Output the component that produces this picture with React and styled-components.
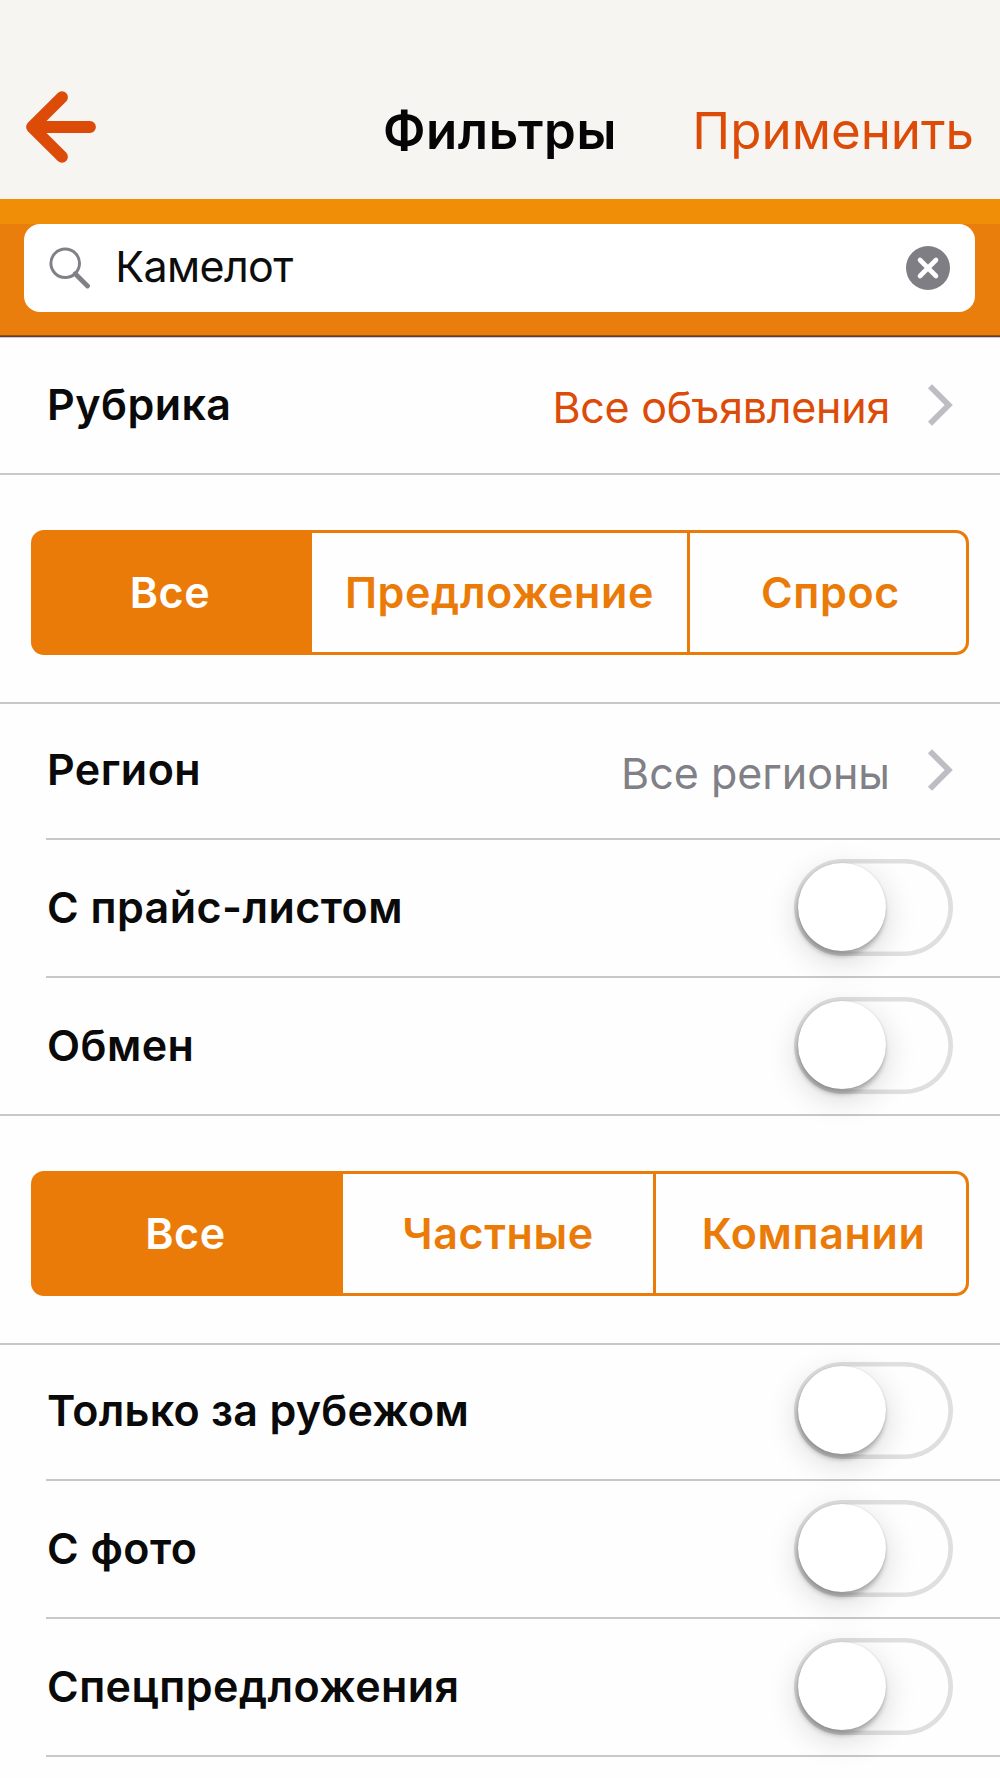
import { useState } from "react";
import styled, { createGlobalStyle } from "styled-components";

const GlobalStyle = createGlobalStyle`
  * {
    box-sizing: border-box;
  }
  body {
    margin: 0;
    background-color: #fefefe;
    font-family: Inter, "Noto Sans", sans-serif;
  }
  button {
    padding: 0;
    border: none;
    background: none;
    font: inherit;
    cursor: pointer;
  }
`;

const Screen = styled.div`
  width: 1000px;
  height: 1778px;
  overflow: hidden;
  background-color: #fefefe;
`;

const Header = styled.header`
  display: grid;
  grid-template-columns: 1fr auto 1fr;
  align-items: center;
  height: 199px;
  padding: 62px 26px 0;
  background-color: #f6f5f1;
`;
const BackButton = styled.button`
  justify-self: start;
  display: flex;
  padding-bottom: 8px;
`;
const Title = styled.h1`
  margin: 0;
  font-size: 51px;
  font-weight: 600;
  line-height: 62px;
  letter-spacing: 0.6px;
  color: #050505;
`;
const ApplyButton = styled.button`
  justify-self: end;
  font-size: 51px;
  line-height: 62px;
  color: #dc4b08;
`;

const SearchBar = styled.div`
  height: 138px;
  padding: 0 25px 0 24.4px;
  border-top: 25px solid #f08e08;
  background-color: #e97e0d;
  box-shadow: inset 0 -1px #5f3a3c, inset 0 -2px #96500f, 0 1px #cbcad0;
`;
const SearchField = styled.label`
  display: flex;
  align-items: center;
  height: 88px;
  padding: 0 25px 0 24.4px;
  border-radius: 16px;
  background-color: #fff;
`;
const SearchInput = styled.input`
  flex: 1;
  min-width: 0;
  height: 60px;
  margin: 0 0 4px 24.4px;
  padding: 0;
  border: none;
  outline: none;
  background: none;
  font-family: inherit;
  font-size: 43px;
  letter-spacing: -0.6px;
  color: #0d0d0d;
`;
const ClearButton = styled.button`
  display: flex;
`;

const Section = styled.section`
  border-bottom: ${(props) => (props.$open ? "none" : "2px solid #c8c7cc")};
`;
const Row = styled.div`
  display: flex;
  align-items: center;
  height: 136px;
  margin-left: 46px;
  padding: 0 47px 1px 1px;

  & + & {
    height: 138px;
    border-top: 2px solid #c8c7cc;
  }
`;
const FirstRow = styled(Row)`
  height: 134px;
  padding-bottom: 3px;
`;
const Label = styled.span`
  flex: 1;
  padding-bottom: 2px;
  font-size: 43px;
  font-weight: 600;
  letter-spacing: ${(props) => props.$spacing || "0.45px"};
  line-height: 52px;
  color: #0a0a0a;
`;
const Value = styled.span`
  margin: ${(props) => (props.$accent ? "4px" : "6px")} 37px 0 0;
  font-size: 43px;
  line-height: 52px;
  letter-spacing: ${(props) => (props.$accent ? "-0.27px" : "0")};
  color: ${(props) => (props.$accent ? "#dc4b08" : "#808086")};
`;

const SegmentArea = styled.div`
  padding: 55px 31px 47px;
`;
const Segmented = styled.div`
  display: grid;
  grid-template-columns: ${(props) => props.$columns};
  gap: 3px;
  height: 125px;
  padding: 3px;
  border-radius: 13px;
  background-color: #eb7b09;
`;
const Segment = styled.button`
  padding-bottom: 2px;
  background-color: ${(props) => (props.$active ? "#eb7b09" : "#fefefe")};
  color: ${(props) => (props.$active ? "#fff" : "#eb7b09")};
  font-size: 43px;
  font-weight: 600;
  letter-spacing: 0.62px;

  &:first-child {
    padding-right: 3px;
    border-radius: 10px 0 0 10px;
  }
  &:last-child {
    padding-left: 5px;
    border-radius: 0 10px 10px 0;
  }
`;

const Track = styled.button`
  display: flex;
  justify-content: ${(props) => (props.$on ? "flex-end" : "flex-start")};
  width: 159px;
  height: 97px;
  padding: 4px;
  border-radius: 49px;
  box-shadow: inset 0 0 0 4.6px ${(props) => (props.$on ? "#eb7b09" : "#dfdfdf")};
`;
const Knob = styled.span`
  width: 88px;
  height: 88px;
  border-radius: 50%;
  background-color: #fff;
  box-shadow: 0 0 2px rgba(0, 0, 0, 0.14), -1px 5px 5px rgba(0, 0, 0, 0.26),
    0 9px 32px rgba(0, 0, 0, 0.16);
`;

const ArrowIcon = () => (
  <svg width="70" height="72" viewBox="0 0 70 72" fill="none">
    <path
      d="M36 6.200 6 36l30 29.800M6 36h58"
      stroke="#dc4b08"
      strokeWidth="11.800"
      strokeLinecap="round"
      strokeLinejoin="round"
    />
  </svg>
);
const SearchIcon = () => (
  <svg width="42" height="42" viewBox="0 0 42 42" fill="none" stroke="#808086">
    <circle cx="16.200" cy="16.300" r="14.300" strokeWidth="3" />
    <path d="M26.200 26.700 38.500 39" strokeWidth="4.800" strokeLinecap="round" />
  </svg>
);
const ClearIcon = () => (
  <svg width="44" height="44" viewBox="0 0 44 44">
    <circle cx="22" cy="22" r="22" fill="#7f7e85" />
    <path
      d="m14 14 16 16M30 14 14 30"
      stroke="#fff"
      strokeWidth="4.600"
      strokeLinecap="round"
    />
  </svg>
);
const ChevronIcon = () => (
  <svg width="26" height="42" viewBox="0 0 26 42" fill="none">
    <path d="M3 2.300 21.700 21 3 39.700" stroke="#bdbdc4" strokeWidth="5.800" />
  </svg>
);

function Toggle({ label }) {
  const [on, setOn] = useState(false);
  return (
    <Track
      role="switch"
      aria-checked={on}
      aria-label={label}
      $on={on}
      onClick={() => setOn(!on)}
    >
      <Knob />
    </Track>
  );
}

function SegmentedControl({ options, columns }) {
  const [active, setActive] = useState(options[0]);
  return (
    <SegmentArea>
      <Segmented $columns={columns}>
        {options.map((option) => (
          <Segment
            key={option}
            $active={option === active}
            onClick={() => setActive(option)}
          >
            {option}
          </Segment>
        ))}
      </Segmented>
    </SegmentArea>
  );
}

export default function App() {
  const [query, setQuery] = useState("Камелот");

  return (
    <Screen>
      <GlobalStyle />
      <Header>
        <BackButton aria-label="Назад">
          <ArrowIcon />
        </BackButton>
        <Title>Фильтры</Title>
        <ApplyButton>Применить</ApplyButton>
      </Header>
      <SearchBar>
        <SearchField>
          <SearchIcon />
          <SearchInput
            value={query}
            spellCheck={false}
            onChange={(e) => setQuery(e.target.value)}
          />
          <ClearButton aria-label="Очистить" onClick={() => setQuery("")}>
            <ClearIcon />
          </ClearButton>
        </SearchField>
      </SearchBar>

      <Section>
        <Row>
          <Label>Рубрика</Label>
          <Value $accent>Все объявления</Value>
          <ChevronIcon />
        </Row>
      </Section>
      <Section>
        <SegmentedControl
          options={["Все", "Предложение", "Спрос"]}
          columns="275px 375px 1fr"
        />
      </Section>
      <Section>
        <FirstRow>
          <Label>Регион</Label>
          <Value>Все регионы</Value>
          <ChevronIcon />
        </FirstRow>
        <Row>
          <Label>С прайс-листом</Label>
          <Toggle label="С прайс-листом" />
        </Row>
        <Row>
          <Label>Обмен</Label>
          <Toggle label="Обмен" />
        </Row>
      </Section>
      <Section>
        <SegmentedControl
          options={["Все", "Частные", "Компании"]}
          columns="306px 310px 1fr"
        />
      </Section>
      <Section $open>
        <FirstRow>
          <Label $spacing="0.27px">Только за рубежом</Label>
          <Toggle label="Только за рубежом" />
        </FirstRow>
        <Row>
          <Label>С фото</Label>
          <Toggle label="С фото" />
        </Row>
        <Row>
          <Label>Спецпредложения</Label>
          <Toggle label="Спецпредложения" />
        </Row>
        <Row />
      </Section>
    </Screen>
  );
}
